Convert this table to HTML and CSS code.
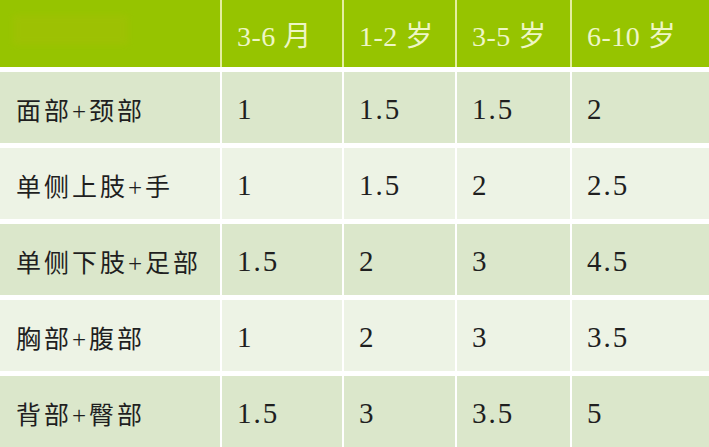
FILE: index.html
```html
<!DOCTYPE html>
<html lang="zh">
<head>
<meta charset="utf-8">
<title>表格</title>
<link rel="stylesheet" href="styles.css">
</head>
<body>
<div class="table">
  <div class="row head">
    <div class="cell first"><div class="blur"></div></div>
    <div class="cell">3-6 月</div>
    <div class="cell">1-2 岁</div>
    <div class="cell">3-5 岁</div>
    <div class="cell">6-10 岁</div>
  </div>
  <div class="row dark">
    <div class="cell first">面部+颈部</div>
    <div class="cell">1</div>
    <div class="cell">1.5</div>
    <div class="cell">1.5</div>
    <div class="cell">2</div>
  </div>
  <div class="row light">
    <div class="cell first">单侧上肢+手</div>
    <div class="cell">1</div>
    <div class="cell">1.5</div>
    <div class="cell">2</div>
    <div class="cell">2.5</div>
  </div>
  <div class="row dark">
    <div class="cell first">单侧下肢+足部</div>
    <div class="cell">1.5</div>
    <div class="cell">2</div>
    <div class="cell">3</div>
    <div class="cell">4.5</div>
  </div>
  <div class="row light">
    <div class="cell first">胸部+腹部</div>
    <div class="cell">1</div>
    <div class="cell">2</div>
    <div class="cell">3</div>
    <div class="cell">3.5</div>
  </div>
  <div class="row dark">
    <div class="cell first">背部+臀部</div>
    <div class="cell">1.5</div>
    <div class="cell">3</div>
    <div class="cell">3.5</div>
    <div class="cell">5</div>
  </div>
</div>
</body>
</html>
```
FILE: styles.css
```css
html, body {
  margin: 0;
  padding: 0;
  background: #ffffff;
}
body {
  width: 709px;
  height: 447px;
  overflow: hidden;
  font-family: "Liberation Serif", "Noto Sans CJK SC", serif;
  color: #1f1f1f;
}
.table {
  display: flex;
  flex-direction: column;
  gap: 5px;
}
.row {
  display: grid;
  grid-template-columns: 220px 120px 111px 113px 137px;
  column-gap: 2px;
  height: 71px;
}
.row.head {
  height: 67px;
  background: #e4eea0;
}
.cell {
  display: flex;
  align-items: center;
  padding-left: 15px;
  padding-top: 3px;
  font-size: 29px;
  letter-spacing: 2px;
}
.cell.first {
  padding-left: 16px;
  font-size: 25px;
  letter-spacing: 3px;
}
.head .cell {
  background: #96c400;
  color: #eef6c6;
  font-size: 28px;
  letter-spacing: 0.5px;
  padding-top: 0;
}
.head .cell.first {
  align-items: flex-start;
  padding-left: 13px;
  padding-top: 15px;
}
.blur {
  width: 115px;
  height: 30px;
  background: #a6bf08;
  opacity: 0.45;
  filter: blur(3px);
}
.dark .cell {
  background: #dbe7cb;
}
.light .cell {
  background: #edf3e5;
}
```
